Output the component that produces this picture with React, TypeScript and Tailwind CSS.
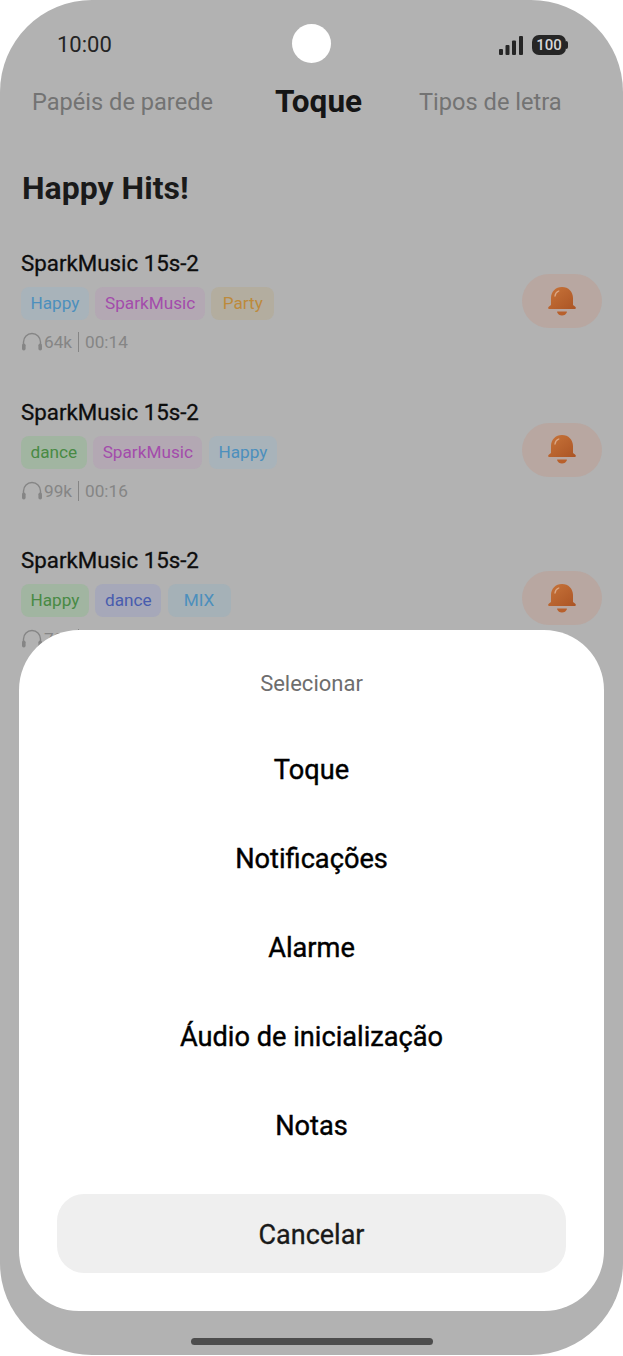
const rows = [
  {
    meta: "64k",
    time: "00:14",
    tags: [
      { label: "Happy", box: "bg-[#a8b3ba]", text: "text-[#4c8fbd]" },
      { label: "SparkMusic", box: "bg-[#b3a8b3]", text: "text-[#a34cab]" },
      { label: "Party", box: "bg-[#b3ad9f]", text: "text-[#bd8a3c]" },
    ],
  },
  {
    meta: "99k",
    time: "00:16",
    tags: [
      { label: "dance", box: "bg-[#a1b5a1]", text: "text-[#488a44]" },
      { label: "SparkMusic", box: "bg-[#b3a8b3]", text: "text-[#a34cab]" },
      { label: "Happy", box: "bg-[#a8b3ba]", text: "text-[#4c8fbd]" },
    ],
  },
  {
    meta: "73k",
    time: "00:15",
    tags: [
      { label: "Happy", box: "bg-[#a1b5a1]", text: "text-[#488a44]" },
      { label: "dance", box: "bg-[#a6a8b9]", text: "text-[#485cae]" },
      { label: "MIX", box: "bg-[#a5b1b7]", text: "text-[#4c8fbd]" },
    ],
  },
]

const options = ["Toque", "Notificações", "Alarme", "Áudio de inicialização", "Notas"]

const BellIcon = () => (
  <svg width="28" height="29" viewBox="0 0 28 29">
    <defs>
      <linearGradient id="bell" x1="0" y1="0" x2="1" y2="1">
        <stop offset="0" stopColor="#c8743a" />
        <stop offset="1" stopColor="#ab5424" />
      </linearGradient>
    </defs>
    <path
      d="M14 0C7.500 0 3 4.800 3 11v7L1 19.500C-.5 20.700 0 22 2 22h24c2 0 2.500-1.300 1-2.500L25 18v-7C25 4.800 20.500 0 14 0z"
      fill="url(#bell)"
    />
    <path d="M9.500 24.500h9c.4 0 .6.300.4.700-.8 2-2.600 3.300-4.900 3.300s-4.100-1.300-4.900-3.300c-.2-.4 0-.7.400-.7z" fill="#b8602c" />
    <path d="M7 9c.3-2.500 1.600-4.200 3.800-5" stroke="#dba887" strokeWidth="1.300" strokeLinecap="round" fill="none" />
  </svg>
)

const HeadphonesIcon = () => (
  <svg width="22" height="20" viewBox="0 0 22 20" fill="none">
    <path d="M2.500 13V10a8.500 8.500 0 0 1 17 0v3" stroke="#858585" strokeWidth="1.400" />
    <rect x="1" y="11.500" width="3.600" height="7" rx="1.800" fill="#858585" />
    <rect x="17.400" y="11.500" width="3.600" height="7" rx="1.800" fill="#858585" />
  </svg>
)

const StatusIcons = () => (
  <div className="flex items-center gap-[9px]">
    <svg width="24" height="19" viewBox="0 0 24 19" fill="#262626">
      <rect x="0" y="13" width="4" height="6" rx="1" />
      <rect x="6.500" y="9" width="4" height="10" rx="1" />
      <rect x="13" y="4.500" width="4" height="14.500" rx="1" />
      <rect x="20" y="0" width="4" height="19" rx="1" />
    </svg>
    <div className="relative mr-[2px] flex h-[20px] w-[34px] items-center justify-center rounded-[7px] bg-[#262626] text-[15px] font-medium text-[#d8d8d8]">
      100
      <span className="absolute right-[-2px] top-[6px] h-[8px] w-[2px] rounded-r-sm bg-[#262626]" />
    </div>
  </div>
)

export default function App() {
  return (
    <div className="min-h-[1356px] w-[623px] bg-white font-['Roboto',sans-serif]">
      <div className="relative h-[1355px] w-[623px] overflow-hidden rounded-[92px] bg-[#b2b2b2]">
        <div className="absolute left-[292px] top-[24px] h-[39px] w-[39px] rounded-full bg-white" />

        <div className="flex items-center justify-between pl-[57px] pr-[55px] pt-[25px]">
          <span className="text-[22px] leading-[40px] text-[#242424]">10:00</span>
          <StatusIcons />
        </div>

        <div className="mt-[18px] flex items-center pl-[32px]">
          <span className="text-[23.600px] leading-[38px] text-[#737373]">Papéis de parede</span>
          <span className="ml-[62px] text-[31.500px] font-bold leading-[38px] text-[#151515]">Toque</span>
          <span className="ml-[57px] text-[23.600px] leading-[38px] text-[#737373]">Tipos de letra</span>
        </div>

        <h1 className="mt-[47px] pl-[22px] text-[32px] font-bold leading-[40px] text-[#1a1a1a]">Happy Hits!</h1>

        <div className="mt-[42px] flex flex-col gap-[44px] px-[21px]">
          {rows.map((row, i) => (
            <div key={i} className="flex items-center justify-between">
              <div className="flex h-[104.500px] flex-col">
                <div className="text-[22.300px] leading-[26px] text-[#0d0d0d] [-webkit-text-stroke:0.3px]">
                  SparkMusic 15s-2
                </div>
                <div className="mt-[11px] flex gap-[6.500px]">
                  {row.tags.map(tag => (
                    <span
                      key={tag.label}
                      className={`min-w-[63px] rounded-[8px] px-[9.500px] text-center text-[17.200px] leading-[33px] ${tag.box} ${tag.text}`}
                    >
                      {tag.label}
                    </span>
                  ))}
                </div>
                <div className="mt-[9px] flex items-center text-[17.200px] leading-[26px] text-[#858585]">
                  <HeadphonesIcon />
                  <span className="ml-[1px]">{row.meta}</span>
                  <span className="mx-[6px] h-[20px] w-px bg-[#858585]" />
                  <span>{row.time}</span>
                </div>
              </div>
              <div className="mb-[2px] flex h-[54px] w-[80px] items-center justify-center rounded-full bg-[#b8a7a1]">
                <BellIcon />
              </div>
            </div>
          ))}
        </div>

        <div className="absolute left-[19px] top-[630px] flex h-[681px] w-[585px] flex-col items-center rounded-[60px] bg-white">
          <div className="mt-[38px] text-[22px] leading-[32px] text-[#6e6e6e]">Selecionar</div>
          <div className="mt-[26px] flex flex-col items-center">
            {options.map(label => (
              <div key={label} className="text-[27.200px] leading-[89px] text-black [-webkit-text-stroke:0.4px]">
                {label}
              </div>
            ))}
          </div>
          <button className="mt-[23px] h-[79px] w-[509px] rounded-[27px] bg-[#efefef] pt-[3px] text-[27px] text-[#1a1a1a] [-webkit-text-stroke:0.3px]">
            Cancelar
          </button>
        </div>

        <div className="absolute bottom-[10px] left-[191px] h-[7px] w-[242px] rounded-full bg-[#4d4d4d]" />
      </div>
    </div>
  )
}
